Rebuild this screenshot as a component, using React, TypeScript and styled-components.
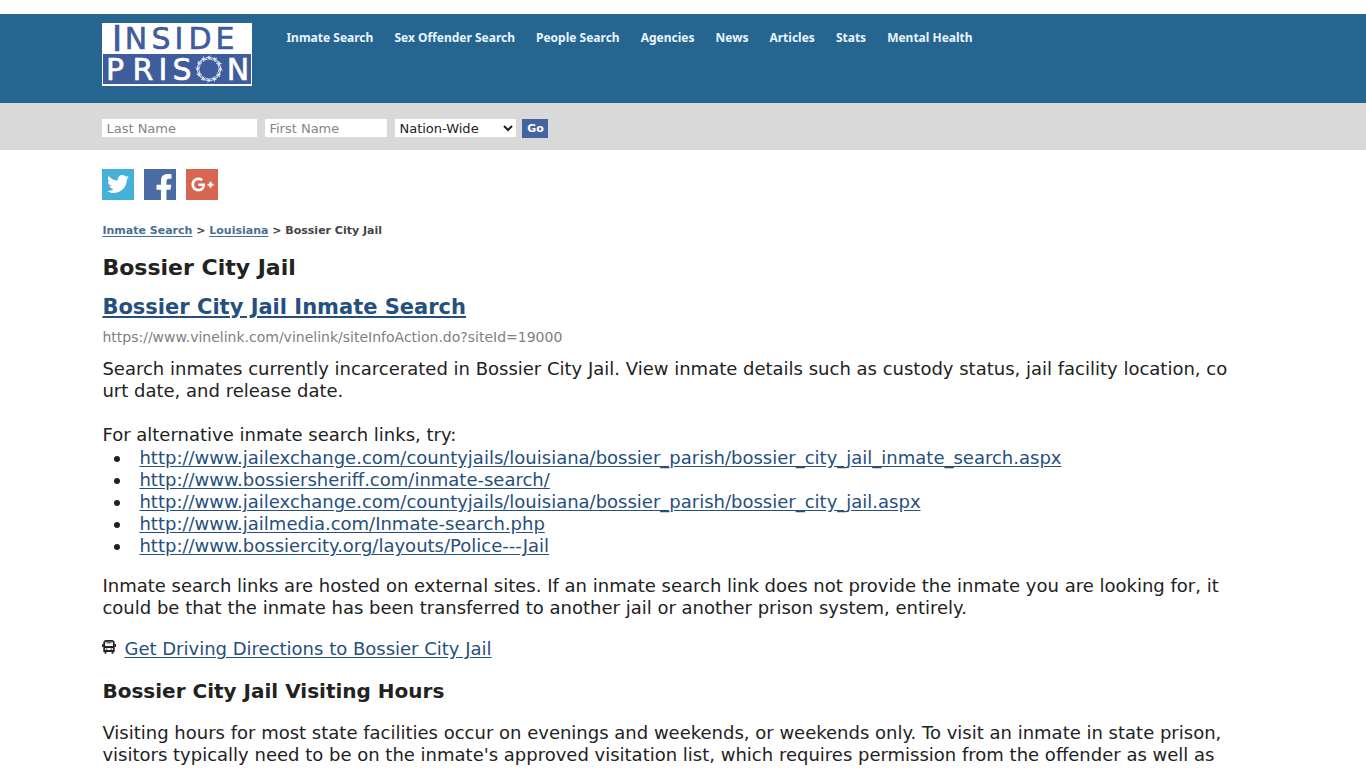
import React from "react";
import styled, { createGlobalStyle } from "styled-components";
import { FaTwitter, FaFacebookF, FaGooglePlusG } from "react-icons/fa";

const Global = createGlobalStyle`
  * { box-sizing: border-box; }
  body { margin: 0; background: #fff; color: #222; font-family: "DejaVu Sans", Verdana, sans-serif; font-size: 18px; line-height: 22px; overflow-x: hidden; }
  a { color: #254f7d; text-decoration: underline; text-underline-offset: 2px; }
`;
const Header = styled.header`
  margin-top: 14px;
  padding: 9px 7.5% 17px;
  background: #26658f;
  display: flex;
  align-items: flex-start;
  gap: 34px;
`;
const LogoLink = styled.a`
  display: block;
  height: 63px;
  svg { overflow: visible; }
`;
const Nav = styled.nav`
  display: flex;
  gap: 21px;
  padding-top: 6px;
`;
const NavLink = styled.a`
  color: #e6f5ff;
  text-decoration: none;
  white-space: nowrap;
  font: bold 12px/18px "Noto Sans", sans-serif;
`;
const SearchBar = styled.form`
  display: flex;
  align-items: center;
  background: #d9d9d9;
  height: 47px;
  padding: 3px 7.5% 0;
`;
const Field = styled.input<{ $w: number }>`
  width: ${(p) => p.$w}px;
  height: 18px;
  margin-right: 8px;
  padding: 1px 4px 0;
  border: 0;
  border-radius: 0;
  background: #fff;
  font: 13px/17px "DejaVu Sans", sans-serif;
  &::placeholder { color: #858585; opacity: 1; }
`;
const Region = styled.select`
  width: 121px;
  height: 18px;
  margin-right: 6px;
  padding: 0;
  border: 0;
  border-radius: 0;
  background: #fff;
  color: #222;
  font: 13px/18px "DejaVu Sans", sans-serif;
`;
const Go = styled.button`
  width: 26px;
  height: 19px;
  padding: 0;
  border: 0;
  background: #4464a0;
  color: #fff;
  font: bold 11px/19px "DejaVu Sans", sans-serif;
`;
const Main = styled.main`
  padding: 19px 7.5% 0;
`;
const Social = styled.div`
  display: flex;
  gap: 10px;
`;
const SocialLink = styled.a<{ $bg: string; $pad?: string }>`
  display: flex;
  justify-content: center;
  width: 32px;
  height: 31px;
  padding: ${(p) => p.$pad};
  overflow: hidden;
  background: ${(p) => p.$bg};
  color: #fff;
  svg { flex: none; }
`;
const Crumbs = styled.nav`
  margin-top: 22px;
  font-size: 11px;
  line-height: 18px;
  font-weight: bold;
  color: #444;
  a { color: #4a6f96; }
`;
const Title = styled.h1`
  margin: 14px 0 0;
  font-size: 22px;
  line-height: 28px;
`;
const ResultTitle = styled.h2`
  margin: 11px 0 0;
  font-size: 21px;
  line-height: 28px;
`;
const Section = styled.h2`
  margin: 17px 0 0;
  font-size: 20px;
  line-height: 28px;
`;
const Url = styled.div`
  margin-top: 5px;
  font-size: 14px;
  line-height: 22px;
  color: #808080;
`;
const Text = styled.p<{ $top: number }>`
  margin: ${(p) => p.$top}px 0 0;
`;
const List = styled.ul`
  margin: 1px 0 0;
  padding-left: 30px;
  li { padding-left: 7px; }
`;
const Directions = styled.p`
  margin: 19px 0 0;
  display: flex;
  align-items: flex-start;
  gap: 8px;
  svg { margin-top: 2px; }
`;

const navItems = ["Inmate Search", "Sex Offender Search", "People Search", "Agencies", "News", "Articles", "Stats", "Mental Health"];

const searchLinks = [
  "http://www.jailexchange.com/countyjails/louisiana/bossier_parish/bossier_city_jail_inmate_search.aspx",
  "http://www.bossiersheriff.com/inmate-search/",
  "http://www.jailexchange.com/countyjails/louisiana/bossier_parish/bossier_city_jail.aspx",
  "http://www.jailmedia.com/Inmate-search.php",
  "http://www.bossiercity.org/layouts/Police---Jail",
];

function Logo() {
  // Barbs are spread evenly round the wire ring that stands for the O.
  const barbs = Array.from({ length: 12 }, (_, i) => i * 30);
  return (
    <svg width="150" height="63" viewBox="0 0 150 63" fontFamily="DejaVu Sans, sans-serif" fontSize="30" textAnchor="middle">
      <rect width="150" height="63" fill="#fff" />
      <rect x="1" y="31" width="148" height="30" fill="#3f5c9c" />
      <g fill="#3f5c9c" stroke="#3f5c9c" strokeWidth="0.6">
        <text x="15" y="28" fontSize="36">I</text>
        <text x="34 59 77 98 123" y="26">NSIDE</text>
      </g>
      <g fill="#fff" stroke="#fff" strokeWidth="0.6">
        <text x="13 41 61 80" y="57">PRIS</text>
        <text x="136" y="57">N</text>
      </g>
      <g transform="translate(107 46)" fill="none" stroke="#dfe7f6">
        <circle r="11.5" strokeWidth="1.2" />
        <circle r="10" strokeWidth="1" strokeDasharray="3 2.2" />
        {barbs.map((a) => (
          <path key={a} d="M-1.5 -9 L1.5 -13.5 M1.5 -9.5 L-1 -13" transform={`rotate(${a})`} strokeWidth="0.9" />
        ))}
      </g>
    </svg>
  );
}

function BusIcon() {
  return (
    <svg width="14" height="14" viewBox="0 0 14 14" fill="none" stroke="#222" strokeWidth="1.8" aria-hidden="true">
      <path d="M2.2 11V3Q2.2 0.9 4.5 0.9H9.5Q11.8 0.9 11.8 3V11Z" />
      <path d="M2.2 7H11.8M0.7 4V7M13.3 4V7M3.5 11V13.8M10.5 11V13.8" />
      <path d="M4 9H5.4M8.6 9H10M4.5 2.8H9.5" strokeWidth="1" />
    </svg>
  );
}

export default function App() {
  return (
    <>
      <Global />
      <Header>
        <LogoLink href="#" aria-label="Inside Prison"><Logo /></LogoLink>
        <Nav>
          {navItems.map((t) => (
            <NavLink href="#" key={t}>{t}</NavLink>
          ))}
        </Nav>
      </Header>
      <SearchBar>
        <Field $w={155} placeholder="Last Name" aria-label="Last Name" />
        <Field $w={122} placeholder="First Name" aria-label="First Name" />
        <Region aria-label="State"><option>Nation-Wide</option></Region>
        <Go type="button">Go</Go>
      </SearchBar>
      <Main>
        <Social>
          <SocialLink href="#" $bg="#45b0d9" $pad="4px 0 0" aria-label="Twitter"><FaTwitter size={22} /></SocialLink>
          <SocialLink href="#" $bg="#4a6ba3" $pad="5px 0 0 8px" aria-label="Facebook"><FaFacebookF size={28} /></SocialLink>
          <SocialLink href="#" $bg="#d66652" $pad="4px 0 0" aria-label="Google Plus"><FaGooglePlusG size={23} /></SocialLink>
        </Social>
        <Crumbs><a href="#">Inmate Search</a> &gt; <a href="#">Louisiana</a> &gt; Bossier City Jail</Crumbs>
        <Title>Bossier City Jail</Title>
        <ResultTitle><a href="#">Bossier City Jail Inmate Search</a></ResultTitle>
        <Url>https://www.vinelink.com/vinelink/siteInfoAction.do?siteId=19000</Url>
        <Text $top={10}>
          Search inmates currently incarcerated in Bossier City Jail. View inmate details such as custody status, jail facility location, co<br />urt date, and release date.
        </Text>
        <Text $top={22}>For alternative inmate search links, try:</Text>
        <List>
          {searchLinks.map((t) => (
            <li key={t}><a href="#">{t}</a></li>
          ))}
        </List>
        <Text $top={18}>
          Inmate search links are hosted on external sites. If an inmate search link does not provide the inmate you are looking for, it<br />could be that the inmate has been transferred to another jail or another prison system, entirely.
        </Text>
        <Directions><BusIcon /><a href="#">Get Driving Directions to Bossier City Jail</a></Directions>
        <Section>Bossier City Jail Visiting Hours</Section>
        <Text $top={17}>
          Visiting hours for most state facilities occur on evenings and weekends, or weekends only. To visit an inmate in state prison,<br />visitors typically need to be on the inmate's approved visitation list, which requires permission from the offender as well as
        </Text>
      </Main>
    </>
  );
}
